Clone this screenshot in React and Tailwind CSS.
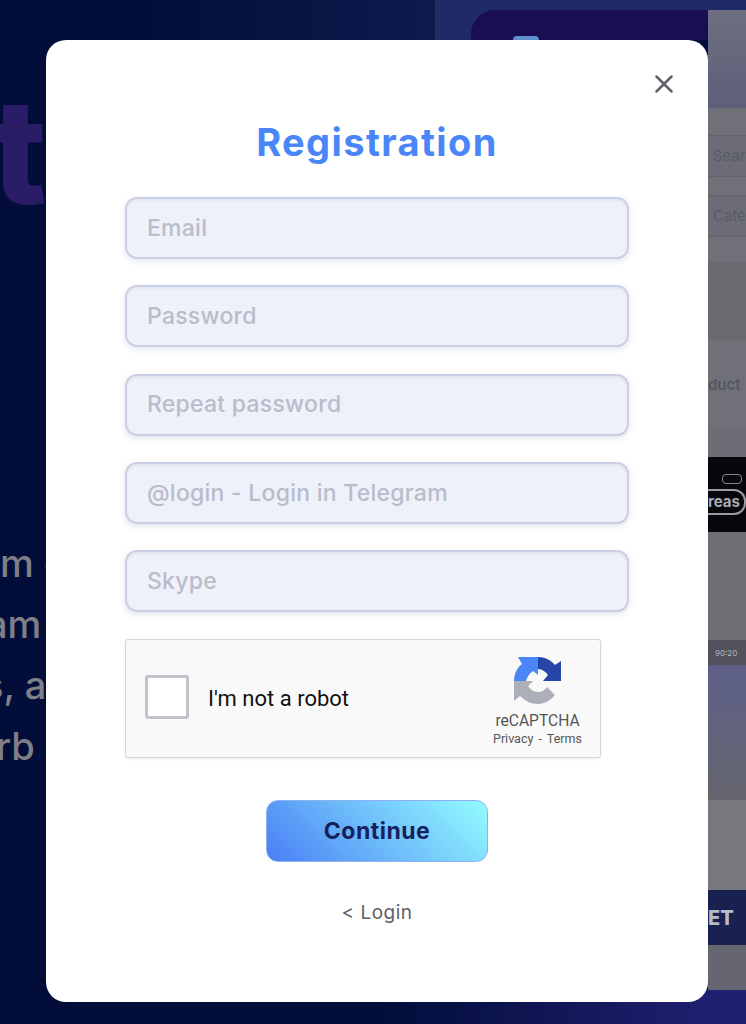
import { X } from "lucide-react";

const fields = ["Email", "Password", "Repeat password", "@login - Login in Telegram", "Skype"];

function RecaptchaLogo() {
  return (
    <svg width="48" height="48" viewBox="0 0 48 48">
      <path d="M0 24C0 17 3 11 8 7L4 0 24 0 24 18 19 14C16 16 13 20 12 24Z" fill="#4a86f7" />
      <path d="M24 0C31 0 37 3 41 8L47 4 47 24 29 24 34 18C32 15 28 12 24 12Z" fill="#2545a8" />
      <path d="M0 24 19 24 14 29C16 32 20 35 24 35 28 35 31 33 33 30L41 38C37 43 31 47 24 47 17 47 11 44 6 39L0 44Z" fill="#adafb8" />
    </svg>
  );
}

function LeftPage() {
  return (
    <div className="flex w-[708px] flex-col">
      <div className="flex h-[40px] shrink-0">
        <div className="w-[140px] bg-[#030d3a]" />
        <div className="w-[295px] bg-gradient-to-r from-[#030d3a] to-[#0d1a4c]" />
        <div className="flex-1 bg-[#1f2a66] pl-[36px] pt-[10px]">
          <div className="flex h-full justify-start rounded-tl-[24px] bg-[#1a0d52] pl-[42px] pt-[26px]">
            <div className="h-[4px] w-[26px] rounded-t-[6px] bg-[#5f8fd0]" />
          </div>
        </div>
      </div>
      <div className="-ml-[9px] mt-[41px] h-[140px] text-[146px] font-extrabold leading-[140px] text-[#2a1c66]">t</div>
      <div className="mt-[312px] flex flex-col text-[38px] font-medium leading-[61px] text-[#7f8087]">
        <div>m c</div>
        <div className="-ml-[14px]">am</div>
        <div className="-ml-[17px]">s, a</div>
        <div className="-ml-[4px]">rb</div>
      </div>
      <div className="mt-auto ml-[380px] h-[34px] bg-gradient-to-r from-[#030d3a] to-[#1f2070]" />
    </div>
  );
}

function RightStrip() {
  return (
    <div className="flex flex-1 flex-col bg-[#1f2a66] pt-[10px] text-[15px] text-[#595a68]">
      <div className="h-[98px] bg-gradient-to-b from-[#6f6f82] to-[#5d5e78]" />
      <div className="h-[27px] bg-[#707178]" />
      <div className="flex h-[42px] items-center border-y border-[#62636b] bg-[#6b6c76] pl-[5px]">Sear</div>
      <div className="h-[18px] bg-[#707178]" />
      <div className="flex h-[42px] items-center border-y border-[#62636b] bg-[#6b6c76] pl-[5px]">Cate</div>
      <div className="h-[25px] bg-[#707178]" />
      <div className="h-[78px] bg-[#6a6b71]" />
      <div className="flex h-[90px] items-center bg-[#707178] font-semibold text-[#55565e]">duct</div>
      <div className="h-[27px] bg-[#6d6e75]" />
      <div className="flex h-[75px] flex-col items-end justify-center gap-[5px] bg-[#07070c]">
        <div className="mr-[4px] h-[10px] w-[20px] rounded-[4px] border border-[#85868e]" />
        <div className="h-[26px] w-[38px] rounded-r-[12px] border-2 border-l-0 border-[#9a9ba3] text-[15px] font-bold leading-[22px] text-[#a9aab2]">reas</div>
      </div>
      <div className="h-[108px] bg-[#6f7076]" />
      <div className="flex h-[25px] items-center bg-[#50515c] pl-[7px] text-[8px] text-[#b5b6bf]">90:20</div>
      <div className="h-[135px] bg-gradient-to-b from-[#5d5f88] to-[#66666e]" />
      <div className="h-[90px] bg-[#77787e]" />
      <div className="flex h-[55px] items-center bg-[#182150] text-[20px] font-extrabold text-[#b8bac8]">ET</div>
      <div className="h-[45px] bg-[#65666f]" />
      <div className="flex-1 bg-[#1f2070]" />
    </div>
  );
}

export default function App() {
  return (
    <div className="relative h-[1024px] overflow-hidden bg-[#030d3a] pt-[40px] font-['Inter',sans-serif]">
      <div className="absolute inset-0 flex">
        <LeftPage />
        <RightStrip />
      </div>

      <div className="relative ml-[46px] flex h-[962px] w-[662px] flex-col items-center rounded-[20px] bg-white pt-[80px]">
        <button className="absolute right-[29px] top-[29px] text-[#5f6068]">
          <X size={30} strokeWidth={2} />
        </button>

        <h1 className="text-[38px] font-bold leading-[44px] tracking-[1.4px] text-[#4a86f7]">Registration</h1>

        <div className="mt-[33px] flex w-[504px] flex-col gap-[26.25px]">
          {fields.map((label) => (
            <div
              key={label}
              className="flex h-[62px] items-center rounded-[12px] border-2 border-[#cbd0e6] bg-[#eef1f9] px-[20px] text-[23px] font-medium tracking-[0.25px] text-[#b9bcca] shadow-[0_2px_6px_rgba(90,100,160,0.18),inset_0_2px_3px_rgba(90,100,160,0.08)]"
            >
              {label}
            </div>
          ))}
        </div>

        <div className="mt-[27px] mr-[28px] flex h-[119px] w-[476px] items-center rounded-[3px] border border-[#d6d6da] bg-[#f9f9f9] pl-[19px] pr-[18px] font-['Roboto',sans-serif] shadow-[0_1px_3px_rgba(0,0,0,0.08)]">
          <div className="mb-[4px] h-[44px] w-[44px] rounded-[3px] border-[3px] border-[#c1c2ca] bg-white" />
          <span className="ml-[19px] text-[22px] text-[#111]">I'm not a robot</span>
          <div className="ml-auto mt-[7px] flex flex-col items-center">
            <RecaptchaLogo />
            <span className="mt-[6px] text-[15.6px] leading-[20px] text-[#555]">reCAPTCHA</span>
            <div className="flex gap-[5px] text-[12.5px] leading-[16px] text-[#555]">
              <span>Privacy</span>
              <span>-</span>
              <span>Terms</span>
            </div>
          </div>
        </div>

        <button className="mt-[42px] h-[62px] w-[222px] shrink-0 rounded-[12px] border border-[#8fb0f0] bg-[linear-gradient(45deg,#4a7ff5,#93fdff)] text-[23px] font-bold tracking-[0.5px] text-[#16205f]">
          Continue
        </button>

        <a className="mt-[39px] text-[19px] leading-[24px] tracking-[0.5px] text-[#5f6068]">&lt; Login</a>
      </div>
    </div>
  );
}
